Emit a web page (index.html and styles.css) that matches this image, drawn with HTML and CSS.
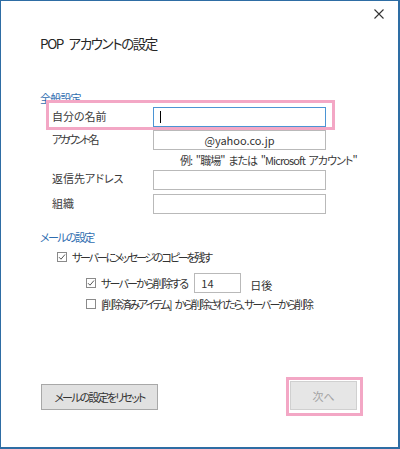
FILE: index.html
```html
<!DOCTYPE html>
<html lang="ja">
<head>
<meta charset="utf-8">
<link rel="stylesheet" href="styles.css">
</head>
<body>
<div class="window">
  <div class="titlebar">
    <svg class="close" width="10" height="10" viewBox="0 0 10 10"><path d="M0.5 0.5 L9.5 9.5 M9.5 0.5 L0.5 9.5" stroke="#333" stroke-width="1.1" fill="none"/></svg>
  </div>
  <div class="content">
    <div class="title">POP アカウントの設定</div>
    <div class="section">全般設定</div>
    <div class="highlight">
      <div class="row first">
        <div class="label">自分の名前</div>
        <div class="field focus"><span class="caret"></span></div>
      </div>
    </div>
    <div class="rows">
      <div class="row">
        <div class="label kana">アカウント名</div>
        <div class="field center">@yahoo.co.jp</div>
      </div>
      <div class="hint">例: "職場" または "Microsoft アカウント"</div>
      <div class="row r3">
        <div class="label">返信先アドレス</div>
        <div class="field"></div>
      </div>
      <div class="row r4">
        <div class="label">組織</div>
        <div class="field"></div>
      </div>
    </div>
    <div class="section s2">メールの設定</div>
    <div class="check c1">
      <span class="box"><svg width="8" height="8" viewBox="0 0 8 8"><path d="M1 4.2 L3 6.2 L7 1.5" stroke="#555" stroke-width="1" fill="none"/></svg></span>
      <span class="ctext">サーバーにメッセージのコピーを残す</span>
    </div>
    <div class="check c2">
      <span class="box"><svg width="8" height="8" viewBox="0 0 8 8"><path d="M1 4.2 L3 6.2 L7 1.5" stroke="#555" stroke-width="1" fill="none"/></svg></span>
      <span class="ctext">サーバーから削除する</span>
      <div class="days">14</div>
      <span class="after">日後</span>
    </div>
    <div class="check c3">
      <span class="box"></span>
      <span class="ctext">[削除済みアイテム] から削除されたら、サーバーから削除</span>
    </div>
    <div class="buttons">
      <div class="btn reset">メールの設定をリセット</div>
      <div class="next-wrap"><div class="btn next">次へ</div></div>
    </div>
  </div>
</div>
</body>
</html>
```
FILE: styles.css
```css
html, body {
  margin: 0;
  padding: 0;
  background: #ffffff;
}
body {
  font-family: "Noto Sans CJK JP", "Noto Sans", sans-serif;
  font-feature-settings: "palt";
  color: #333333;
  font-size: 11px;
}
.window {
  width: 400px;
  height: 449px;
  box-sizing: border-box;
  border-style: solid;
  border-color: #2e6da4;
  border-width: 1px 2px 2px 1px;
  background: #ffffff;
  overflow: hidden;
}
.titlebar {
  height: 32px;
  display: flex;
  justify-content: flex-end;
  align-items: flex-start;
  padding-right: 14px;
  box-sizing: border-box;
  padding-top: 8px;
}
.close {
  display: block;
}
.content {
  padding-left: 39px;
}
.title {
  font-size: 13.5px;
  line-height: 20px;
  height: 20px;
  color: #262626;
  letter-spacing: -1.4px;
  word-spacing: 4px;
}
.section {
  color: #2f6db0;
  line-height: 16px;
  height: 16px;
  margin-top: 37px;
  letter-spacing: -0.8px;
}
.section.s2 {
  margin-top: 15px;
  letter-spacing: -1.6px;
}
.highlight {
  position: relative;
  z-index: 1;
  background: #ffffff;
  border: 3px solid #f3a7c5;
  width: 280px;
  height: 20px;
  margin-top: -6px;
  margin-left: 6px;
  padding-left: 3px;
  padding-top: 4px;
  box-sizing: content-box;
}
.row {
  display: flex;
  align-items: flex-start;
  height: 20px;
}
.rows {
  margin-left: 12px;
}
.label {
  width: 101px;
  flex: none;
  line-height: 16px;
  padding-top: 1px;
  color: #3a3a3a;
}
.label.kana {
  letter-spacing: -2.4px;
}
.field {
  width: 173px;
  height: 20px;
  box-sizing: border-box;
  border: 1px solid #b9b9b9;
  background: #ffffff;
  line-height: 18px;
  color: #333333;
  display: flex;
  align-items: center;
}
.field.focus {
  border-color: #4b94d4;
  padding-left: 6px;
}
.caret {
  display: block;
  width: 1px;
  height: 12px;
  background: #000000;
}
.field.center {
  justify-content: center;
}
.hint {
  line-height: 14px;
  height: 14px;
  margin-top: 3px;
  margin-left: 128px;
  color: #3a3a3a;
  white-space: nowrap;
  letter-spacing: -0.9px;
  word-spacing: 2px;
}
.row.r3 {
  margin-top: 3px;
}
.row.r3 .label {
  padding-top: 0;
}
.row.r4 {
  margin-top: 4px;
}
.check {
  display: flex;
  align-items: center;
  line-height: 16px;
  white-space: nowrap;
  color: #333333;
}
.box {
  width: 10px;
  height: 10px;
  box-sizing: border-box;
  border: 1px solid #8a8a8a;
  background: #ffffff;
  display: flex;
  align-items: center;
  justify-content: center;
  flex: none;
  margin-right: 5px;
}
.box svg {
  display: block;
}
.check.c1 {
  margin-top: 4px;
  margin-left: 17px;
}
.check.c1 .ctext {
  letter-spacing: -2.2px;
}
.check.c2 {
  margin-top: 8px;
  margin-left: 46px;
  height: 20px;
}
.check.c2 .ctext {
  letter-spacing: -1.8px;
}
.check.c3 {
  margin-top: 3px;
  margin-left: 46px;
}
.check.c3 .ctext {
  letter-spacing: -2.1px;
  word-spacing: 4px;
}
.days {
  width: 47px;
  height: 20px;
  box-sizing: border-box;
  border: 1px solid #b9b9b9;
  line-height: 18px;
  padding-left: 6px;
  margin-left: 7px;
  color: #333333;
}
.after {
  margin-left: 9px;
  padding-top: 3px;
}
.buttons {
  margin-top: 65px;
  display: flex;
  justify-content: space-between;
  align-items: center;
  margin-right: 35px;
  margin-left: 1px;
}
.btn {
  box-sizing: border-box;
  display: flex;
  align-items: center;
  justify-content: center;
}
.reset {
  width: 117px;
  height: 26px;
  background: #e1e1e1;
  border: 1px solid #a8a8a8;
  color: #333333;
  letter-spacing: -1.8px;
}
.next-wrap {
  border: 3px solid #f3a7c5;
  padding: 1px;
  width: 69px;
  height: 31px;
}
.next {
  width: 67px;
  height: 29px;
  background: #e6e6e6;
  border: 1px solid #d0d0d0;
  color: #a3a3a3;
}
```
